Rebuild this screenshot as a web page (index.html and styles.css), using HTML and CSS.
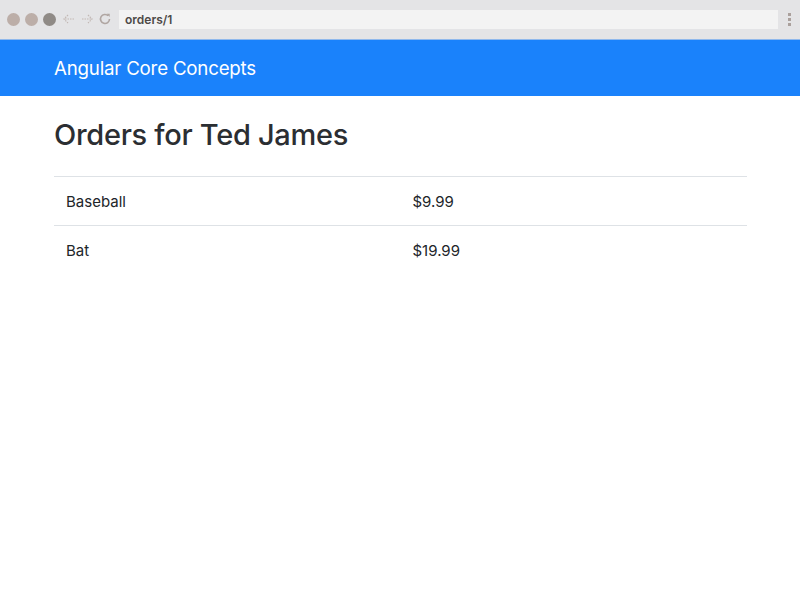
FILE: index.html
```html
<!DOCTYPE html>
<html>
<head>
<meta charset="utf-8">
<link rel="stylesheet" href="styles.css">
</head>
<body>
<div class="chrome">
  <div class="lights">
    <span class="light"></span>
    <span class="light"></span>
    <span class="light dark"></span>
  </div>
  <div class="navs">
    <svg width="14" height="14" viewBox="0 0 14 14"><path d="M12 7H2M6 3L2 7l4 4" fill="none" stroke="#c2b8b4" stroke-width="1.2" stroke-dasharray="1.5 1"/></svg>
    <svg width="14" height="14" viewBox="0 0 14 14"><path d="M2 7h10M8 3l4 4-4 4" fill="none" stroke="#c2b8b4" stroke-width="1.2" stroke-dasharray="1.5 1"/></svg>
    <svg width="14" height="14" viewBox="0 0 14 14"><path d="M11.5 7a4.5 4.5 0 1 1-1.3-3.2" fill="none" stroke="#b0a6a2" stroke-width="1.6"/><path d="M8.5 1.8h3.2v3.2z" fill="#b0a6a2"/></svg>
  </div>
  <div class="address">orders/1</div>
  <div class="kebab"><span></span><span></span><span></span></div>
</div>
<nav class="navbar">
  <span class="brand">Angular Core Concepts</span>
</nav>
<main class="container">
  <h1 class="title">Orders for Ted James</h1>
  <table class="orders">
    <tbody>
      <tr><td>Baseball</td><td>$9.99</td></tr>
      <tr><td>Bat</td><td>$19.99</td></tr>
    </tbody>
  </table>
</main>
</body>
</html>
```

FILE: styles.css
```css
* { box-sizing: border-box; }
body {
  margin: 0;
  font-family: "Inter", "Liberation Sans", Arial, sans-serif;
  background: #fff;
  color: #212529;
}
.chrome {
  height: 40px;
  background: #e4e4e6;
  border-bottom: 1px solid #8fb8ec;
  display: flex;
  align-items: center;
  padding: 0 0 1px 7px;
}
.lights { display: flex; gap: 5px; }
.light {
  width: 13px; height: 13px; border-radius: 50%;
  background: #bcaea8;
}
.light.dark { background: #8f8a86; }
.navs {
  display: flex; gap: 4px; align-items: center;
  margin-left: 6px;
}
.address {
  margin-left: 7px;
  flex: 1;
  height: 19px;
  background: #f3f3f3;
  font-size: 12px;
  font-weight: 600;
  color: #4e4a48;
  line-height: 19px;
  padding-left: 6px;
}
.kebab {
  width: 22px;
  display: flex; flex-direction: column; align-items: center; gap: 2px;
}
.kebab span { width: 3px; height: 3px; background: #aaa09c; }
.navbar {
  height: 56px;
  background: #1a82fb;
  display: flex;
  align-items: center;
  padding-left: 54px;
}
.brand {
  color: #fff;
  font-size: 18.7px;
  letter-spacing: -0.2px;
}
.container {
  padding: 0 53px 0 54px;
}
.title {
  margin: 21px 0 0;
  font-size: 29px;
  font-weight: 500;
  letter-spacing: -0.3px;
  line-height: 36px;
  color: #2b2e32;
}
.orders {
  margin-top: 23px;
  width: 100%;
  border-collapse: collapse;
  table-layout: fixed;
}
.orders td {
  border-top: 1px solid #dee2e6;
  padding: 0 12px;
  height: 49px;
  font-size: 15px;
  color: #212529;
  vertical-align: middle;
}
```
